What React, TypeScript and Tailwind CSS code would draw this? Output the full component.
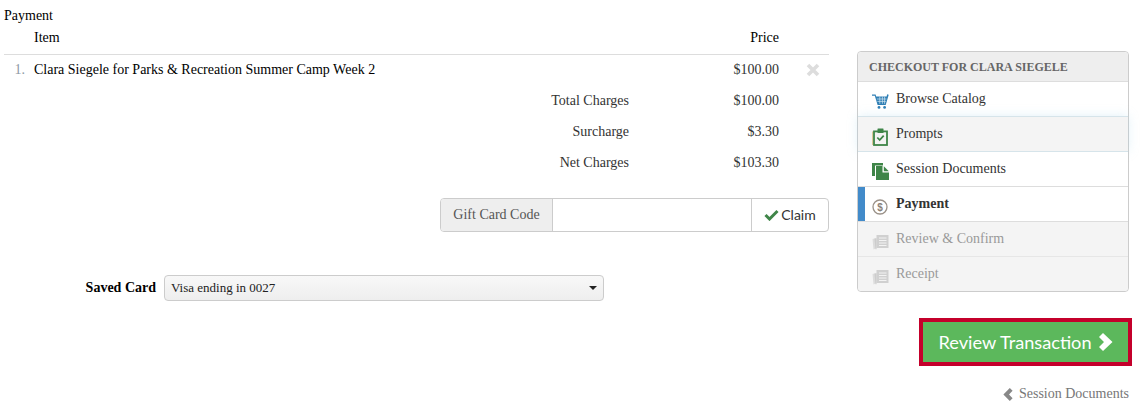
// App.tsx
const CartIcon = () => (
  <svg viewBox="0 0 17 15" className="w-[17px] h-[15px]">
    <path d="M0 0.5h3.6l.6 2H14.6l.6-2.2 1.5.4-3 10.3H5.6L2.8 1.8H0z" fill="#2f7fb5" />
    <path d="M4.8 5h9.6M5.4 7.4h8.4M7.8 2.6v7.2M10.4 2.6v7.2M12.6 2.6v7.2" stroke="#d5e6f1" strokeWidth="0.7" />
    <circle cx="7" cy="13.4" r="1.4" fill="#2f7fb5" />
    <circle cx="12.6" cy="13.4" r="1.4" fill="#2f7fb5" />
  </svg>
)

const ClipboardIcon = () => (
  <svg viewBox="0 0 16 18" className="w-[16px] h-[18px]">
    <path d="M0.6 3.5v13.5" stroke="#d9c48f" strokeWidth="1" />
    <rect x="2" y="3.4" width="13" height="13.6" fill="none" stroke="#3f8548" strokeWidth="1.8" />
    <rect x="5.5" y="0.5" width="6" height="4.5" rx="0.5" fill="#3f8548" />
    <path d="M5.3 9.5l2.4 2.5 4-4.4" fill="none" stroke="#3f8548" strokeWidth="1.8" />
  </svg>
)

const DocsIcon = () => (
  <svg viewBox="0 0 17 17" className="w-[17px] h-[17px]">
    <rect x="0" y="0" width="11" height="13" fill="#3f8548" />
    <path d="M3 2.5h8l6 6V17H3z" fill="#fff" />
    <path d="M4 3h6.5v6.5H17V17H4z" fill="#3f8548" />
    <path d="M11.8 3.2l5 5h-5z" fill="#3f8548" />
  </svg>
)

const DollarIcon = () => (
  <svg viewBox="0 0 16 16" className="w-[16px] h-[16px]">
    <circle cx="8" cy="8" r="7" fill="none" stroke="#9a9188" strokeWidth="1.3" />
    <text x="8" y="11.5" textAnchor="middle" fontSize="10" fill="#8a8178" fontFamily="Liberation Sans, sans-serif">$</text>
  </svg>
)

const NewsIcon = () => (
  <svg viewBox="0 0 17 16" className="w-[17px] h-[16px]">
    <path d="M0.5 5l4-1v10l-3 1.6z" fill="#dcdcdc" />
    <path d="M2.5 4.5h2v10.8h-1z" fill="#cccccc" />
    <rect x="4.5" y="1" width="12" height="13" fill="#d0d0d0" />
    <path d="M7 4h7.5M7 6.5h7.5M7 9h7.5M7 11.5h7.5" stroke="#f3f3f3" strokeWidth="1" />
  </svg>
)

const RemoveIcon = () => (
  <svg viewBox="0 0 14 14" className="w-[14px] h-[14px]">
    <path d="M2 2l10 10M12 2L2 12" stroke="#dddddd" strokeWidth="3.6" />
  </svg>
)

const CheckIcon = () => (
  <svg viewBox="0 0 15 12" className="w-[15px] h-[12px]">
    <path d="M1.5 6l4 4L13.5 2" fill="none" stroke="#3f8548" strokeWidth="3" />
  </svg>
)

const ChevronRight = () => (
  <svg viewBox="0 0 15 18" className="w-[15px] h-[18px]">
    <path d="M5 0l9.5 9L5 18 1 14l5-5-5-5z" fill="#fff" />
  </svg>
)

const ChevronLeft = () => (
  <svg viewBox="0 0 10 13" className="w-[10px] h-[13px]">
    <path d="M6.8 0L0.4 6.5 6.8 13 9.6 10.2 6 6.5 9.6 2.8z" fill="#888888" />
  </svg>
)

const steps = [
  { label: 'Browse Catalog', icon: <CartIcon />, row: 'bg-white text-[#333] border-[#dddddd]' },
  { label: 'Prompts', icon: <ClipboardIcon />, row: 'z-10 bg-[#f4f4f4] text-[#333] border-[#d6e4ea] shadow-[0_0_10px_rgba(170,215,235,0.35)]' },
  { label: 'Session Documents', icon: <DocsIcon />, row: 'z-10 bg-white text-[#333] border-[#d6e4ea]' },
  { label: 'Payment', icon: <DollarIcon />, row: 'bg-white text-[#333] font-bold border-[#dddddd]', active: true },
  { label: 'Review & Confirm', icon: <NewsIcon />, row: 'bg-[#f4f4f4] text-[#999] border-[#dddddd]' },
  { label: 'Receipt', icon: <NewsIcon />, row: 'bg-[#f4f4f4] text-[#999] border-[#e6e6e6] rounded-b-[4px]' },
]

const totals = [
  { label: 'Total Charges', value: '$100.00' },
  { label: 'Surcharge', value: '$3.30' },
  { label: 'Net Charges', value: '$103.30' },
]

export default function App() {
  return (
    <div className="flex w-[1142px] h-[411px] overflow-hidden bg-white text-[14px] leading-[20px] text-black font-['Liberation_Serif',serif]">
      <div className="w-[825px] ml-[4px] pt-[6px] shrink-0">
        <div className="h-[20px]">Payment</div>
        <div className="flex h-[26px] pt-[2px] border-b border-[#dddddd] box-content">
          <div className="w-[30px]" />
          <div className="flex-1">Item</div>
          <div className="w-[100px] text-right mr-[50px]">Price</div>
        </div>
        <div className="flex h-[29px] items-center">
          <div className="w-[21px] text-right text-[#8f9aa5]">1.</div>
          <div className="flex-1 ml-[9px]">Clara Siegele for Parks &amp; Recreation Summer Camp Week 2</div>
          <div className="w-[100px] text-right text-[#333]">$100.00</div>
          <div className="w-[50px] flex pl-[27px] items-center">
            <RemoveIcon />
          </div>
        </div>
        <div className="mt-[1px]">
          {totals.map((t) => (
            <div key={t.label} className="flex h-[31px] items-center text-[#333]">
              <div className="w-[625px] text-right">{t.label}</div>
              <div className="w-[150px] text-right">{t.value}</div>
            </div>
          ))}
        </div>
        <div className="flex justify-end mt-[20px]">
          <div className="flex w-[389px] h-[34px] border border-[#cccccc] rounded-[4px] overflow-hidden">
            <div className="w-[112px] flex items-center justify-center bg-[#eeeeee] border-r border-[#cccccc] text-[#555]">
              Gift Card Code
            </div>
            <input className="flex-1 min-w-0 bg-white outline-none" />
            <div className="w-[77px] flex items-center justify-center gap-[2px] border-l border-[#cccccc] text-[#333] font-['Lato',sans-serif]">
              <CheckIcon />
              Claim
            </div>
          </div>
        </div>
        <div className="flex items-center mt-[43px]">
          <div className="w-[152px] text-right font-bold">Saved Card</div>
          <div className="ml-[8px] w-[440px] h-[26px] flex items-center justify-between pl-[6px] pr-[6px] border border-[#cccccc] rounded-[4px] bg-gradient-to-b from-[#f8f8f8] to-[#eeeeee] text-[13px] text-[#222]">
            Visa ending in 0027
            <span className="w-0 h-0 border-x-[4px] border-x-transparent border-t-[4px] border-t-[#222]" />
          </div>
        </div>
      </div>

      <div className="w-[272px] ml-[28px] pt-[51px] shrink-0 flex flex-col items-end">
        <div className="w-full border border-[#cccccc] rounded-[4px]">
          <div className="h-[29px] flex items-center pl-[11px] bg-[#eeeeee] rounded-t-[4px] text-[12px] font-bold text-[#666]">
            CHECKOUT FOR CLARA SIEGELE
          </div>
          {steps.map((s) => (
            <div key={s.label} className={`relative h-[35px] flex items-center border-t pl-[14px] ${s.row}`}>
              {s.active && <span className="absolute left-0 inset-y-0 w-[7px] bg-[#428bca]" />}
              <span className="w-[24px] flex mt-[5px]">{s.icon}</span>
              <span className="-mt-[1px]">{s.label}</span>
            </div>
          ))}
        </div>
        <button className="mt-[26px] mr-[-3px] w-[213px] h-[48px] flex items-center justify-center gap-[6px] border-[4px] border-[#c4002b] bg-[#5cb85c] text-white text-[18.2px] font-['Lato',sans-serif]">
          Review Transaction
          <ChevronRight />
        </button>
        <div className="mt-[18px] flex items-center gap-[6px] text-[#777]">
          <ChevronLeft />
          Session Documents
        </div>
      </div>
    </div>
  )
}
